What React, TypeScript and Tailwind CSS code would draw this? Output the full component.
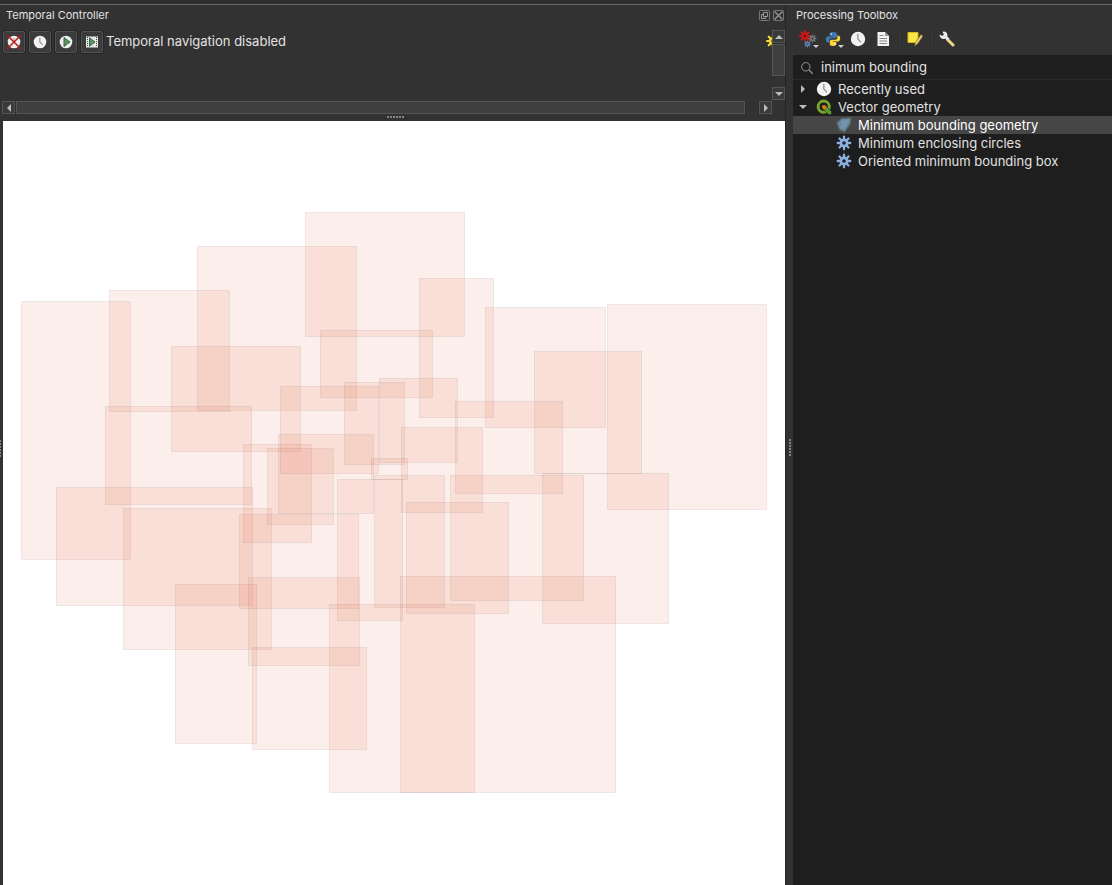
import { useState, type ReactNode } from "react";

// x1, y1, x2, y2 of every bounding box
const BOXES = [
  [21, 301, 131, 560], [109, 290, 230, 412], [197, 246, 357, 411], [305, 212, 465, 337],
  [171, 346, 301, 452], [105, 406, 252, 505], [56, 487, 253, 606], [123, 508, 272, 650],
  [175, 584, 257, 744], [252, 647, 367, 750], [248, 577, 360, 666], [239, 514, 359, 609],
  [243, 444, 312, 543], [267, 448, 334, 525], [278, 434, 374, 514], [280, 386, 379, 474],
  [320, 330, 433, 398], [344, 382, 405, 465], [379, 378, 458, 463], [419, 278, 494, 418],
  [485, 307, 606, 428], [607, 304, 767, 510], [534, 351, 642, 474], [455, 401, 563, 494],
  [542, 473, 669, 624], [450, 475, 584, 601], [401, 427, 483, 513], [371, 458, 408, 480],
  [374, 475, 445, 608], [337, 479, 403, 621], [406, 502, 509, 614], [400, 576, 616, 793],
  [329, 604, 475, 793],
];

const DOTS = [0, 1, 2, 3, 4, 5];

function Teeth({ cx, cy, r, color, hole }: { cx: number; cy: number; r: number; color: string; hole: string }) {
  return (
    <g transform={`translate(${cx} ${cy})`}>
      {[0, 45, 90, 135].map((a) => (
        <line key={a} x1={-r} x2={r} y1="0" y2="0" stroke={color} strokeWidth={r * 0.36} strokeLinecap="round" transform={`rotate(${a})`} />
      ))}
      <circle r={r * 0.7} fill={color} />
      <circle r={r * 0.28} fill={hole} />
    </g>
  );
}

function ClockIcon({ className }: { className: string }) {
  return (
    <svg viewBox="0 0 16 16" className={className}>
      <circle cx="8" cy="8" r="7.2" fill="#f2f2f2" />
      <path d="M7.8 2.8V8l3.2 3.2" fill="none" stroke="#9a9a9a" strokeWidth="1.4" />
    </svg>
  );
}

function Arrow({ dir, className = "" }: { dir: "up" | "down" | "left" | "right"; className?: string }) {
  const d = {
    up: "M0 6h8L4 2z",
    down: "M0 2h8L4 6z",
    left: "M6 0v8L2 4z",
    right: "M2 0v8l4-4z",
  }[dir];
  return (
    <svg viewBox="0 0 8 8" className={`size-2 shrink-0 ${className}`}>
      <path d={d} fill="#bdbdbd" />
    </svg>
  );
}

function ScrollButton({ dir, label }: { dir: "up" | "down" | "left" | "right"; label: string }) {
  return (
    <button aria-label={label} className="flex size-[13px] shrink-0 items-center justify-center border border-[#555] bg-[#3a3a3a]">
      <Arrow dir={dir} />
    </button>
  );
}

function ModeButton({ label, children }: { label: string; children: ReactNode }) {
  return (
    <button aria-label={label} className="flex size-[22px] items-center justify-center rounded-xs border border-[#525252] bg-[#3b3b3b] outline outline-[#262626]">
      {children}
    </button>
  );
}

function Grip({ vertical = false }: { vertical?: boolean }) {
  return (
    <div className={vertical ? "flex flex-col gap-px" : "flex gap-px"}>
      {DOTS.map((i) => (
        <span key={i} className="size-0.5 bg-[#858585]" />
      ))}
    </div>
  );
}

function TemporalController() {
  return (
    <section className="flex flex-col">
      <header className="flex h-5 items-center gap-[3px] pr-px pl-1.5">
        <h2 className="flex-1 text-[11px]">Temporal Controller</h2>
        <button aria-label="Float panel">
          <svg viewBox="0 0 11 11" className="size-[11px]" fill="none" stroke="#999">
            <rect x=".5" y=".5" width="10" height="10" rx="1" stroke="#777" />
            <path d="M4.500 2.500h4v4h-4zM4.500 4.500h-2v4h4v-2" />
          </svg>
        </button>
        <button aria-label="Close panel">
          <svg viewBox="0 0 11 11" className="size-[11px]" fill="none" stroke="#999">
            <rect x=".5" y=".5" width="10" height="10" rx="1" stroke="#777" />
            <path d="M1.500 1.500l8 8m0-8l-8 8" strokeWidth="1.200" />
          </svg>
        </button>
      </header>
      <div className="flex pt-[5px]">
        <div className="flex h-[70px] min-w-0 flex-1 items-start overflow-hidden pt-px pl-[3px]">
          <div className="flex gap-1">
            <ModeButton label="Turn off temporal navigation">
              <svg viewBox="0 0 16 16" className="size-4">
                <circle cx="8" cy="8" r="6.300" fill="#eee" />
                <path d="M8 4v4l3 3" stroke="#999" fill="none" />
                <path d="M1 1l14 14M15 1L1 15" stroke="#c01818" strokeWidth="1.500" />
              </svg>
            </ModeButton>
            <ModeButton label="Fixed range temporal navigation">
              <ClockIcon className="size-3.5" />
            </ModeButton>
            <ModeButton label="Animated temporal navigation">
              <svg viewBox="0 0 14 14" className="size-3.5">
                <circle cx="7" cy="7" r="6.300" fill="#eee" />
                <path d="M5 2.500v9l6-4.500z" fill="#5d9263" stroke="#386b3f" />
              </svg>
            </ModeButton>
            <ModeButton label="Movie navigation">
              <svg viewBox="0 0 14 14" className="size-3.5">
                <path d="M1 1.500h12v11H1z" fill="#e8e8e8" />
                <path d="M2.500 2v10M11.500 2v10" stroke="#444" strokeDasharray="1 1" />
                <path d="M4.500 2.800v8.400l5.500-4.200z" fill="#5d9263" stroke="#386b3f" />
              </svg>
            </ModeButton>
          </div>
          <span className="flex h-[21px] flex-1 items-center pl-[3px] text-[13px] whitespace-nowrap">Temporal navigation disabled</span>
          <button aria-label="Temporal settings" className="mt-[3px] w-1.5 shrink-0 overflow-hidden">
            <svg viewBox="0 0 14 14" className="size-3.5 max-w-none">
              <Teeth cx={7} cy={7} r={6} color="#f3d92f" hole="#323232" />
            </svg>
          </button>
        </div>
        <div className="flex w-[13px] flex-col bg-[#2c2c2c]">
          <ScrollButton dir="up" label="Scroll up" />
          <div className="mt-px h-8 border border-[#555] bg-[#3f3f3f]" />
          <div className="flex-1 bg-[#323232]" />
          <ScrollButton dir="down" label="Scroll down" />
        </div>
      </div>
      <div className="mt-px mr-[13px] ml-0.5 flex gap-px bg-[#2c2c2c]">
        <ScrollButton dir="left" label="Scroll left" />
        <div className="flex-1 border border-[#555] bg-[#3f3f3f]" />
        <div className="w-3 bg-[#323232]" />
        <ScrollButton dir="right" label="Scroll right" />
      </div>
      <div className="flex h-[7px] items-start justify-center pt-[2px] pl-1.5">
        <Grip />
      </div>
    </section>
  );
}

function MapCanvas() {
  return (
    <div className="flex flex-1 items-stretch">
      <div className="-mr-px flex w-1 items-center border-r border-[#262626] pb-[110px]">
        <div className="w-px overflow-hidden">
          <Grip vertical />
        </div>
      </div>
      <svg viewBox="3 121 782 764" className="block min-w-0 flex-1 bg-white" role="img" aria-label="Map canvas">
        {BOXES.map(([x1, y1, x2, y2]) => (
          <rect
            key={`${x1}-${y1}`}
            x={x1 + 0.5}
            y={y1 + 0.5}
            width={x2 - x1 - 1}
            height={y2 - y1 - 1}
            fill="#e97455"
            fillOpacity=".12"
            stroke="#232323"
            strokeOpacity=".08"
          />
        ))}
      </svg>
    </div>
  );
}

function ToolButton({ label, menu = false, children }: { label: string; menu?: boolean; children: ReactNode }) {
  return (
    <button aria-label={label} className="relative flex size-5 items-center justify-center">
      {children}
      {menu && (
        <svg viewBox="0 0 6 4" className="absolute -right-px bottom-0 h-1 w-1.5">
          <path d="M0 0h6L3 3z" fill="#ccc" />
        </svg>
      )}
    </button>
  );
}

const Separator = () => <span className="h-3 w-0.5 border-l border-[#292929] bg-[#3a3a3a]" />;

function ToolboxToolbar() {
  return (
    <div className="flex h-[30px] items-center gap-[5px] pb-0.5 pl-[5px]">
      <ToolButton label="Models" menu>
        <svg viewBox="0 0 18 18" className="size-[18px]">
          <Teeth cx={6} cy={6} r={5} color="#d01818" hole="#701010" />
          <Teeth cx={13.5} cy={8.5} r={3.5} color="#777" hole="#323232" />
          <Teeth cx={8.500} cy={14} r={3} color="#6487bd" hole="#323232" />
        </svg>
      </ToolButton>
      <ToolButton label="Scripts" menu>
        <svg viewBox="0 0 16 16" className="size-4">
          <path d="M8 1C5.200 1 4.600 2 4.600 3.200V5h3.600v.6H3C1.500 5.600.8 6.800.8 8.500S1.600 11.400 3 11.400h1.400V9.600c0-1.300 1-2.300 2.300-2.300h3.400c1.100 0 1.900-.9 1.900-1.900V3.200C12 1.800 10.800 1 8 1z" fill="#3d7ab3" />
          <path d="M8 15c2.800 0 3.400-1 3.400-2.200V11H7.800v-.6H13c1.500 0 2.200-1.200 2.200-2.900S14.400 4.600 13 4.600h-.6v1.800c0 1.300-1 2.300-2.300 2.300H6.700c-1.100 0-1.900.9-1.900 1.900v2.200C4.800 14.200 5.200 15 8 15z" fill="#ffd43b" />
          <circle cx="6.300" cy="3" r=".7" fill="#fff" />
          <circle cx="9.700" cy="13" r=".7" fill="#fff" />
        </svg>
      </ToolButton>
      <ToolButton label="History">
        <ClockIcon className="size-4" />
      </ToolButton>
      <ToolButton label="Results Viewer">
        <svg viewBox="0 0 16 16" className="size-4">
          <path d="M2.500 1h7.500l4 4v10H2.500z" fill="#f2f2f2" />
          <path d="M10 1v4h4z" fill="#999" />
          <path d="M4.500 4.500h4M4.500 7.500h7.500M4.500 10h7.500M4.500 12.500h7.500" stroke="#888" />
        </svg>
      </ToolButton>
      <Separator />
      <ToolButton label="Edit Features In-Place">
        <svg viewBox="0 0 16 16" className="size-4">
          <path d="M1 1.500h10v10H1z" fill="#f9e648" stroke="#d8bd10" />
          <path d="M14 3.500L8.500 11.500 7.500 15l3-2L16 5z" fill="#e9cf75" stroke="#6f5a24" strokeWidth=".6" />
        </svg>
      </ToolButton>
      <Separator />
      <ToolButton label="Options">
        <svg viewBox="0 0 16 16" className="size-4">
          <path d="M8.500 8.500L14 14" stroke="#efd68b" strokeWidth="3" strokeLinecap="round" />
          <path d="M3.500.8a3.600 3.600 0 0 1 4.700 4.600l2.300 2.200-2 2-2.300-2.200A3.600 3.600 0 0 1 .8 3.500l2.300 1.600 1.800-1.700z" fill="#ececec" />
        </svg>
      </ToolButton>
    </div>
  );
}

const QgisIcon = () => (
  <svg viewBox="0 0 16 16" className="size-4">
    <circle cx="7.700" cy="7.700" r="5.600" fill="none" stroke="#76a72d" strokeWidth="3" />
    <path d="M8 8h3l4.500 4.500v3h-3L8 11z" fill="#5c9a2e" stroke="#1e1e1e" strokeWidth=".5" />
    <path d="M6.200 6.200h3l1.500 2-2.500 2.500-2-1.600z" fill="#ee7913" />
  </svg>
);

const HullIcon = () => (
  <svg viewBox="0 0 16 16" className="size-4">
    <path d="M5.500 1.500L15 1l-1 6-5.500 8-5-2.500L1 6z" fill="#6888a3" stroke="#5a6b63" strokeWidth="1.200" />
    <path d="M6 3.500l7-.5L8.500 12 4.500 10.500z" fill="#7593ad" />
  </svg>
);

const AlgorithmIcon = () => (
  <svg viewBox="0 0 16 16" className="size-4">
    <Teeth cx={8} cy={8} r={6.300} color="#8bb0e4" hole="#1e1e1e" />
  </svg>
);

const ALGORITHMS = [
  { name: "Minimum bounding geometry", icon: <HullIcon /> },
  { name: "Minimum enclosing circles", icon: <AlgorithmIcon /> },
  { name: "Oriented minimum bounding box", icon: <AlgorithmIcon /> },
];

function ToolboxTree() {
  const [selected, setSelected] = useState(ALGORITHMS[0].name);
  return (
    <div className="flex-1 border-t border-[#292929] bg-[#1e1e1e] text-[13px] leading-[18px] whitespace-nowrap">
      <button className="flex h-[18px] w-full items-center pl-1.5">
        <Arrow dir="right" className="mr-[9px]" />
        <ClockIcon className="mr-1.5 size-4" />
        Recently used
      </button>
      <button className="flex h-[18px] w-full items-center pl-1.5" aria-expanded="true">
        <Arrow dir="down" className="mr-[9px]" />
        <span className="mr-1.5">
          <QgisIcon />
        </span>
        Vector geometry
      </button>
      {ALGORITHMS.map((a) => (
        <button
          key={a.name}
          onClick={() => setSelected(a.name)}
          className={`flex h-[18px] w-full items-center gap-1.5 pl-[43px] ${a.name === selected ? "bg-[#464646] text-white" : ""}`}
        >
          {a.icon}
          {a.name}
        </button>
      ))}
    </div>
  );
}

function ProcessingToolbox() {
  return (
    <section className="flex w-[319px] shrink-0 flex-col">
      <header className="flex h-5 items-center pl-[3px]">
        <h2 className="text-[11px]">Processing Toolbox</h2>
      </header>
      <ToolboxToolbar />
      <label className="flex h-6 items-center gap-2 rounded-l-xs bg-[#1e1e1e] pt-px pl-2">
        <svg viewBox="0 0 12 12" className="size-3 shrink-0" fill="none" stroke="#999">
          <circle cx="4.800" cy="4.800" r="4.200" />
          <path d="M8 8l4 4" strokeWidth="1.200" />
        </svg>
        <input aria-label="Search" defaultValue="inimum bounding" className="min-w-0 flex-1 bg-transparent text-[13px] outline-none" />
      </label>
      <ToolboxTree />
    </section>
  );
}

export default function App() {
  return (
    <div className="flex min-h-screen flex-col bg-[#323232] font-['Inter',sans-serif] text-[#e2e2e2]">
      <div className="h-[5px] border-b border-[#6a6a6a] bg-[#2e2e2e]" />
      <main className="flex flex-1">
        <div className="flex min-w-0 flex-1 flex-col">
          <TemporalController />
          <MapCanvas />
        </div>
        <div className="flex w-2 items-center justify-center border-l border-[#262626] pt-1">
          <Grip vertical />
        </div>
        <ProcessingToolbox />
      </main>
    </div>
  );
}
